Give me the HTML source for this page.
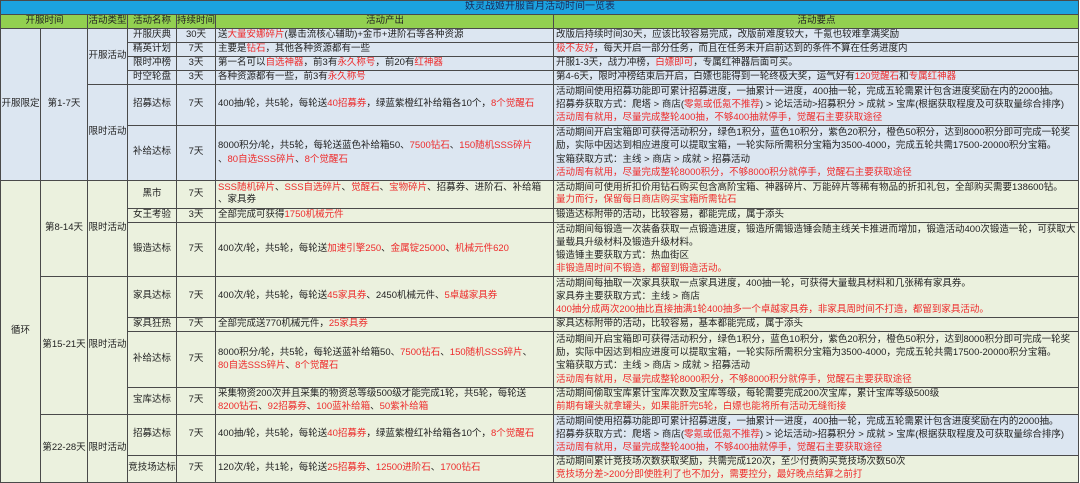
<!DOCTYPE html>
<html><head><meta charset="utf-8">
<style>
html,body{margin:0;padding:0;background:#fff;}
body{width:1080px;height:482px;overflow:hidden;font-family:"Liberation Sans","Noto Sans CJK SC",sans-serif;font-size:9.5px;color:#222;position:relative;}
table{border-collapse:collapse;table-layout:fixed;width:1078px;position:absolute;left:0;top:0;}
td{border:1px solid #4a4a4a;padding:0 1px 0 2px;line-height:12.6px;white-space:nowrap;overflow:hidden;vertical-align:middle;}
.c{text-align:center;padding:0;}
.t td{background:#1ba3e0;color:#1a2a5a;text-align:center;font-size:10px;}
.h td{background:#92d050;text-align:center;}
.a td{background:#dce6f1;}
.b td{background:#ebf1de;}
td.bl{background:#dce6f1 !important;}
.r{color:#ee2b2b;}
.m{line-height:13.3px;}
</style></head><body>
<table>
<colgroup><col style="width:40px"><col style="width:47px"><col style="width:40px"><col style="width:49px"><col style="width:39px"><col style="width:338px"><col style="width:525px"></colgroup>
<tr class="t" style="height:14px"><td colspan="7">妖灵战姬开服首月活动时间一览表</td></tr>
<tr class="h" style="height:14px"><td colspan="2">开服时间</td><td class="c">活动类型</td><td class="c">活动名称</td><td class="c">持续时间</td><td>活动产出</td><td>活动要点</td></tr>
<tr class="a" style="height:14px"><td rowspan="6" class="c">开服限定</td><td rowspan="6" class="c">第1-7天</td><td rowspan="4" class="c">开服活动</td><td class="c">开服庆典</td><td class="c">30天</td><td>送<span class="r">大量安娜碎片</span>(暴击流核心辅助)+金币+进阶石等各种资源</td><td>改版后持续时间30天，应该比较容易完成，改版前难度较大，千氪也较难拿满奖励</td></tr>
<tr class="a" style="height:14px"><td class="c">精英计划</td><td class="c">7天</td><td>主要是<span class="r">钻石</span>，其他各种资源都有一些</td><td><span class="r">极不友好</span>，每天开启一部分任务，而且在任务未开启前达到的条件不算在任务进度内</td></tr>
<tr class="a" style="height:14px"><td class="c">限时冲榜</td><td class="c">3天</td><td>第一名可以<span class="r">自选神器</span>，前3有<span class="r">永久称号</span>，前20有<span class="r">红神器</span></td><td>开服1-3天，战力冲榜，<span class="r">白嫖即可</span>，专属红神器后面可买。</td></tr>
<tr class="a" style="height:13px"><td class="c">时空轮盘</td><td class="c">3天</td><td>各种资源都有一些，前3有<span class="r">永久称号</span></td><td>第4-6天，限时冲榜结束后开启，白嫖也能得到一轮终极大奖，运气好有<span class="r">120觉醒石</span>和<span class="r">专属红神器</span></td></tr>
<tr class="a" style="height:41px"><td rowspan="2" class="c">限时活动</td><td class="c">招募达标</td><td class="c">7天</td><td>400抽/轮，共5轮，每轮送<span class="r">40招募券</span>，绿蓝紫橙红补给箱各10个，<span class="r">8个觉醒石</span></td><td class="m">活动期间使用招募功能即可累计招募进度，一抽累计一进度，400抽一轮，完成五轮需累计包含进度奖励在内的2000抽。<br>招募券获取方式：爬塔 &gt; 商店(<span class="r">零氪或低氪不推荐</span>) &gt; 论坛活动&gt;招募积分 &gt; 成就 &gt; 宝库(根据获取程度及可获取量综合排序)<br><span class="r">活动周有就用，尽量完成整轮400抽，不够400抽就停手，觉醒石主要获取途径</span></td></tr>
<tr class="a" style="height:55px"><td class="c">补给达标</td><td class="c">7天</td><td class="m">8000积分/轮，共5轮，每轮送蓝色补给箱50、<span class="r">7500钻石</span>、<span class="r">150随机SSS碎片</span><br>、<span class="r">80自选SSS碎片</span>、<span class="r">8个觉醒石</span></td><td class="m">活动期间开启宝箱即可获得活动积分，绿色1积分，蓝色10积分，紫色20积分，橙色50积分，达到8000积分即可完成一轮奖<br>励，实际中因达到相应进度可以提取宝箱，一轮实际所需积分宝箱为3500-4000，完成五轮共需17500-20000积分宝箱。<br>宝箱获取方式：主线 &gt; 商店 &gt; 成就 &gt; 招募活动<br><span class="r">活动周有就用，尽量完成整轮8000积分，不够8000积分就停手，觉醒石主要获取途径</span></td></tr>
<tr class="b" style="height:28px"><td rowspan="9" class="c">循环</td><td rowspan="3" class="c">第8-14天</td><td rowspan="3" class="c">限时活动</td><td class="c">黑市</td><td class="c">7天</td><td><span class="r">SSS随机碎片</span>、<span class="r">SSS自选碎片</span>、<span class="r">觉醒石</span>、<span class="r">宝物碎片</span>、招募券、进阶石、补给箱<br>、家具券</td><td>活动期间可使用折扣价用钻石购买包含高阶宝箱、神器碎片、万能碎片等稀有物品的折扣礼包，全部购买需要138600钻。<br><span class="r">量力而行，保留每日商店购买宝箱所需钻石</span></td></tr>
<tr class="b" style="height:14px"><td class="c">女王考验</td><td class="c">3天</td><td>全部完成可获得<span class="r">1750机械元件</span></td><td>锻造达标附带的活动，比较容易，都能完成，属于添头</td></tr>
<tr class="b" style="height:54px"><td class="c">锻造达标</td><td class="c">7天</td><td>400次/轮，共5轮，每轮送<span class="r">加速引擎250</span>、<span class="r">金属锭25000</span>、<span class="r">机械元件620</span></td><td class="m">活动期间每锻造一次装备获取一点锻造进度，锻造所需锻造锤会随主线关卡推进而增加，锻造活动400次锻造一轮，可获取大<br>量载具升级材料及锻造升级材料。<br>锻造锤主要获取方式：热血街区<br><span class="r">非锻造周时间不锻造，都留到锻造活动。</span></td></tr>
<tr class="b" style="height:41px"><td rowspan="4" class="c">第15-21天</td><td rowspan="4" class="c">限时活动</td><td class="c">家具达标</td><td class="c">7天</td><td>400次/轮，共5轮，每轮送<span class="r">45家具券</span>、2450机械元件、<span class="r">5卓越家具券</span></td><td class="m">活动期间每抽取一次家具获取一点家具进度，400抽一轮，可获得大量载具材料和几张稀有家具券。<br>家具券主要获取方式：主线 &gt; 商店<br><span class="r">400抽分成两次200抽比直接抽满1轮400抽多一个卓越家具券，非家具周时间不打造，都留到家具活动。</span></td></tr>
<tr class="b" style="height:14px"><td class="c">家具狂热</td><td class="c">7天</td><td>全部完成送770机械元件，<span class="r">25家具券</span></td><td>家具达标附带的活动，比较容易，基本都能完成，属于添头</td></tr>
<tr class="b" style="height:56px"><td class="c">补给达标</td><td class="c">7天</td><td class="m">8000积分/轮，共5轮，每轮送蓝补给箱50、<span class="r">7500钻石</span>、<span class="r">150随机SSS碎片</span>、<br><span class="r">80自选SSS碎片</span>、<span class="r">8个觉醒石</span></td><td class="m">活动期间开启宝箱即可获得活动积分，绿色1积分，蓝色10积分，紫色20积分，橙色50积分，达到8000积分即可完成一轮奖<br>励，实际中因达到相应进度可以提取宝箱，一轮实际所需积分宝箱为3500-4000，完成五轮共需17500-20000积分宝箱。<br>宝箱获取方式：主线 &gt; 商店 &gt; 成就 &gt; 招募活动<br><span class="r">活动周有就用，尽量完成整轮8000积分，不够8000积分就停手，觉醒石主要获取途径</span></td></tr>
<tr class="b" style="height:27px"><td class="c">宝库达标</td><td class="c">7天</td><td>采集物资200次并且采集的物资总等级500级才能完成1轮，共5轮，每轮送<br><span class="r">8200钻石</span>、<span class="r">92招募券</span>、<span class="r">100蓝补给箱</span>、<span class="r">50紫补给箱</span></td><td>活动期间偷取宝库累计宝库次数及宝库等级，每轮需要完成200次宝库，累计宝库等级500级<br><span class="r">前期有罐头就拿罐头，如果能肝完5轮，白嫖也能将所有活动无缝衔接</span></td></tr>
<tr class="b" style="height:41px"><td rowspan="2" class="c">第22-28天</td><td rowspan="2" class="c">限时活动</td><td class="c">招募达标</td><td class="c">7天</td><td>400抽/轮，共5轮，每轮送<span class="r">40招募券</span>，绿蓝紫橙红补给箱各10个，<span class="r">8个觉醒石</span></td><td class="bl m">活动期间使用招募功能即可累计招募进度，一抽累计一进度，400抽一轮，完成五轮需累计包含进度奖励在内的2000抽。<br>招募券获取方式：爬塔 &gt; 商店(<span class="r">零氪或低氪不推荐</span>) &gt; 论坛活动&gt;招募积分 &gt; 成就 &gt; 宝库(根据获取程度及可获取量综合排序)<br><span class="r">活动周有就用，尽量完成整轮400抽，不够400抽就停手，觉醒石主要获取途径</span></td></tr>
<tr class="b" style="height:27px"><td class="c">竞技场达标</td><td class="c">7天</td><td>120次/轮，共1轮，每轮送<span class="r">25招募券</span>、<span class="r">12500进阶石</span>、<span class="r">1700钻石</span></td><td>活动期间累计竞技场次数获取奖励，共需完成120次，至少付费购买竞技场次数50次<br><span class="r">竞技场分差&gt;200分即使胜利了也不加分，需要控分，最好晚点结算之前打</span></td></tr>
</table>
</body></html>
